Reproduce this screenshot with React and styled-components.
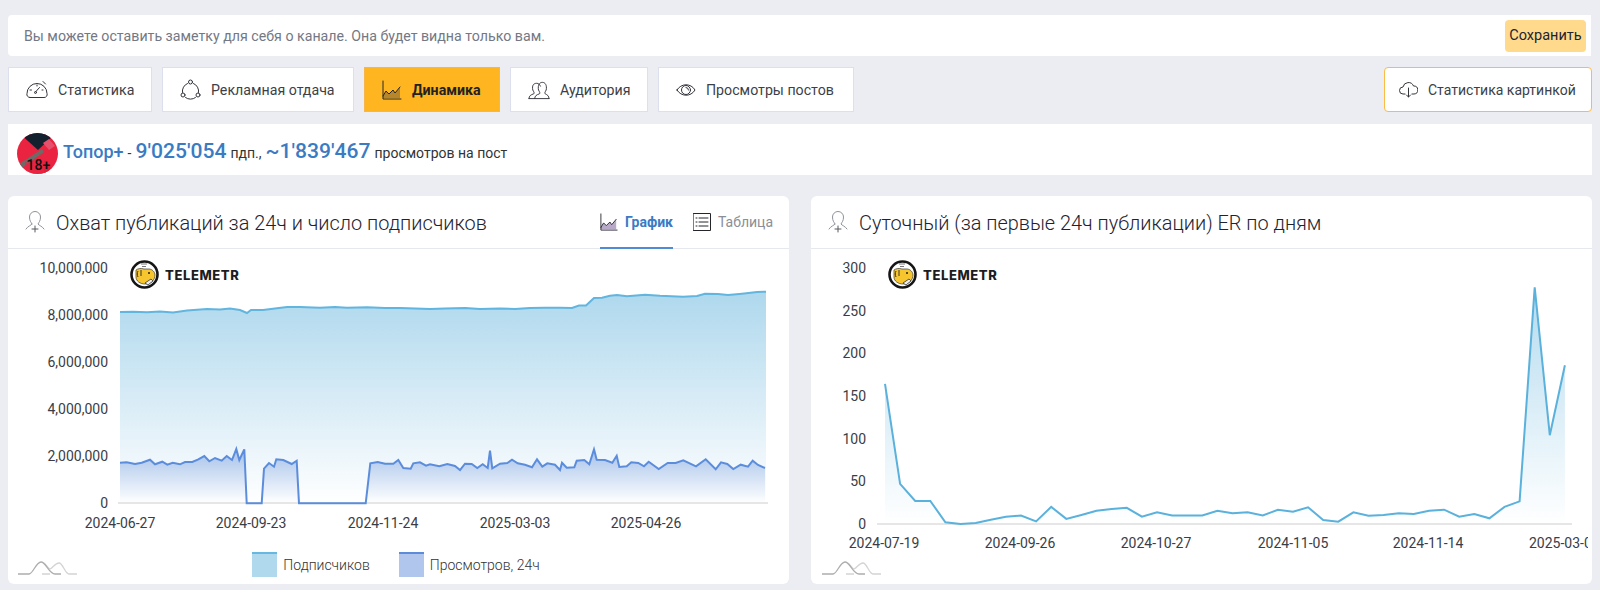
import styled, { createGlobalStyle } from 'styled-components';

const GlobalStyle = createGlobalStyle`
  html, body {
    margin: 0;
    padding: 0;
    background: #ecedf2;
    font-family: Roboto, "Noto Sans", sans-serif;
    color: #222;
  }
`;

const Page = styled.div`
  width: 1600px;
  height: 590px;
  box-sizing: border-box;
  padding: 15px 8px 6px;
  overflow: hidden;
  display: flex;
  flex-direction: column;
`;

const NoteBar = styled.div`
  height: 41px;
  box-sizing: border-box;
  background: #fff;
  border-radius: 4px 0 0 4px;
  display: flex;
  align-items: center;
  justify-content: space-between;
  padding: 0 5px 0 16px;
  margin: 0 1px 11px 0;
`;

const NoteText = styled.span`
  font-size: 14.2px;
  color: #737884;
`;

const SaveButton = styled.button`
  width: 81px;
  height: 32px;
  border: 0;
  padding: 0;
  border-radius: 4px;
  background: #ffd98c;
  font: 400 14.5px Roboto, sans-serif;
  color: #1c2430;
`;

const TabsRow = styled.div`
  display: flex;
  gap: 10px;
  height: 45px;
  margin-bottom: 12px;
`;

const NavTab = styled.div`
  width: ${(p) => p.$width}px;
  box-sizing: border-box;
  display: flex;
  align-items: center;
  gap: 10px;
  padding-left: 17px;
  background: ${(p) => (p.$active ? '#ffb520' : '#fff')};
  border: 1px solid ${(p) => (p.$active ? '#f7b64a' : '#dcdfee')};
  font-size: 14.2px;
  font-weight: ${(p) => (p.$active ? 700 : 400)};
  color: ${(p) => (p.$active ? '#222' : '#3c3f48')};
`;

const ImageButton = styled.div`
  margin-left: auto;
  width: 208px;
  box-sizing: border-box;
  display: flex;
  align-items: center;
  gap: 10px;
  padding-left: 14px;
  background: #fff;
  border: 1px solid #fbbb45;
  border-radius: 4px;
  font-size: 14px;
  color: #3c3f48;
`;

const ChannelBar = styled.div`
  height: 51px;
  box-sizing: border-box;
  background: #fff;
  display: flex;
  align-items: center;
  gap: 5px;
  padding: 8px 0 0 9px;
  margin-bottom: 21px;
`;

const ChannelLine = styled.div`
  display: flex;
  align-items: baseline;
  gap: 4px;
  margin-bottom: 6px;
  font-size: 14px;
  color: #333;
`;

const ChannelName = styled.span`
  font-size: 18px;
  font-weight: 500;
  color: #3a7bc4;
`;

const ChannelNumber = styled.span`
  font-size: 21.1px;
  font-weight: 500;
  color: #3a7bc4;
`;

const Cards = styled.div`
  display: grid;
  grid-template-columns: 781px 781px;
  gap: 22px;
  height: 388px;
`;

const Card = styled.section`
  position: relative;
  background: #fff;
  border-radius: 6px;
  overflow: hidden;
`;

const CardHeader = styled.header`
  height: 53px;
  box-sizing: border-box;
  border-bottom: 1px solid #e6e8f0;
  display: flex;
  align-items: center;
  gap: 11px;
  padding-left: 17px;
`;

const CardTitle = styled.h2`
  margin: 2px 0 0;
  font-size: 19.9px;
  font-weight: 300;
  color: #1d2330;
`;

const ViewTabs = styled.div`
  margin-left: auto;
  display: flex;
  gap: 20px;
  height: 100%;
  padding-right: 16px;
`;

const ViewTab = styled.div`
  display: flex;
  align-items: center;
  gap: 7px;
  margin-bottom: -1px;
  font-size: 14px;
  font-weight: ${(p) => (p.$active ? 700 : 400)};
  color: ${(p) => (p.$active ? '#3a7bc4' : '#8b8e96')};
  border-bottom: 2px solid ${(p) => (p.$active ? '#4f8cd6' : 'transparent')};
`;

const ChartSvg = styled.svg`
  display: block;
`;

const AxisText = styled.text`
  font: 400 14px Roboto, sans-serif;
  fill: #3a3d45;
`;

const Legend = styled.div`
  display: flex;
  justify-content: center;
  gap: 29px;
  margin-top: 7px;
  padding-right: 5px;
`;

const LegendItem = styled.div`
  display: flex;
  align-items: center;
  gap: 6px;
  font-size: 14px;
  font-weight: 300;
  color: #333;
`;

const Swatch = styled.span`
  width: 25px;
  height: 25px;
  box-sizing: border-box;
  background: ${(p) => p.$fill};
  border-top: 2px solid ${(p) => p.$line};
`;

const LogoMark = styled.div`
  position: absolute;
  top: 64px;
  left: ${(p) => p.$left}px;
  display: flex;
  align-items: center;
  gap: 6px;
  font: 800 13px Inter, Roboto, sans-serif;
  letter-spacing: 0.6px;
  color: #1d1d1f;
`;

const Navigator = styled.svg`
  position: absolute;
  left: ${(p) => p.$left}px;
  bottom: 8px;
`;

const lineIcon = {
  fill: 'none',
  stroke: '#33353c',
  strokeWidth: 1,
  strokeLinecap: 'round',
  strokeLinejoin: 'round',
};

const GaugeIcon = () => (
  <svg width="22" height="20" viewBox="0 0 22 20" {...lineIcon}>
    <path d="M4 17.5h14a3 3 0 0 0 3-4 10 10 0 0 0-20 0 3 3 0 0 0 3 4z" />
    <path d="M9.5 12l4-4.5M4 10h1.5M17 10h-1M11 5v1" />
    <circle cx="9.5" cy="12.5" r="1" />
    <path d="M17 1.5l2.5 2.5" />
  </svg>
);

const OrbitIcon = () => (
  <svg width="21" height="21" viewBox="0 0 21 21" {...lineIcon}>
    <path d="M7.5 4.5a8 8 0 0 0-5 9M13.5 4.5a8 8 0 0 1 5 9M5.5 18.5a8 8 0 0 0 10 0" />
    <circle cx="10.5" cy="3" r="2" />
    <circle cx="3" cy="16" r="2" />
    <circle cx="18" cy="16" r="2" />
  </svg>
);

const TrendIcon = ({ fill = '#b8862a', size = 20 }) => (
  <svg width={size} height={size} viewBox="0 0 20 20" {...lineIcon} stroke="#24262c">
    <path d="M1 16l3-5 3 3 4-4 2 3 5-6v11H1z" fill={fill} stroke="none" />
    <path d="M1 1v18h18" />
    <path d="M1 16l3-5 3 3 4-4 2 3 5-6" />
  </svg>
);

const PeopleIcon = () => (
  <svg width="22" height="20" viewBox="0 0 23 20" {...lineIcon}>
    <path d="M1 19c0-3 2-4 5-5 1-1 0-2-1-4-1-5 1-7 4-7 2 0 3 1 4 3" />
    <path d="M7 19c0-3 2-4 5-5 1-1 0-2-1-4-1-5 1-8 4-8s5 3 4 8c-1 2-2 3-1 4 2 1 4 2 4 5" />
    <path d="M1 19h21" />
  </svg>
);

const EyeIcon = () => (
  <svg width="20" height="14" viewBox="0 0 20 14" {...lineIcon}>
    <path d="M1 7c4-7 14-7 18 0-4 7-14 7-18 0z" />
    <circle cx="10" cy="7" r="4.5" />
    <path d="M10 4.5a2.5 2.5 0 0 1 2.5 2.5" />
  </svg>
);

const CloudIcon = () => (
  <svg width="19" height="17" viewBox="0 0 19 17" {...lineIcon}>
    <path d="M6 13H4a3.5 3.5 0 0 1 0-7 5.5 5.5 0 0 1 10.5-1 4 4 0 0 1 .5 8h-2" />
    <path d="M9.5 7v9M7.5 14l2 2 2-2" />
  </svg>
);

const PersonPlusIcon = () => (
  <svg width="20" height="22" viewBox="0 0 20 22" {...lineIcon} stroke="#8f929a">
    <path d="M7 13c-1-2-2.500-3-2.500-7a5.500 5.500 0 0 1 11 0c0 4-1.500 5-2.500 7 1 1.500 4 2 6 5M7 13c-1 1.500-4 2-6 5" />
    <path d="M10 15v6M7 18h6" stroke="#55585f" />
  </svg>
);

const TableIcon = () => (
  <svg width="18" height="18" viewBox="0 0 18 18" {...lineIcon} stroke="#24262c">
    <rect x="0.5" y="0.5" width="17" height="17" />
    <path d="M6 5h9M6 9h9M6 13h9" />
    <path d="M3 5h1M3 9h1M3 13h1" />
  </svg>
);

const Avatar = () => (
  <svg width="41" height="41" viewBox="0 0 41 41">
    <defs>
      <clipPath id="avatar-clip">
        <circle cx="20.5" cy="20.5" r="20.5" />
      </clipPath>
    </defs>
    <g clipPath="url(#avatar-clip)">
      <rect width="41" height="41" fill="#ea2440" />
      <path d="M2 0h37L21 17z" fill="#13202e" />
      <path d="M27 27l14 14H27z" fill="#d81f3a" />
      <path d="M2 31L25 16l2 3L5 35z" fill="#6d6a68" />
      <path d="M26 10l6-4 6 7-6 4z" fill="#e5506a" />
      <path d="M8 41V29h22v12z" fill="#ea2440" opacity="0.55" />
      <text x="9.5" y="37" fontFamily="Roboto, sans-serif" fontSize="14" fontWeight="500" fill="#111">18+</text>
    </g>
  </svg>
);

const LogoGlyph = () => (
  <svg width="29" height="29" viewBox="0 0 29 29">
    <circle cx="14.5" cy="14.500" r="13" fill="#fff" stroke="#151515" strokeWidth="2.6" />
    <path d="M6 10c2-1.500 5-2 8-1h5c3 0 6 3 6 6 0 5-4 9-10 9-5 0-9-3-9-7z" fill="#f7c62f" stroke="#333" strokeWidth="0.7" />
    <path d="M11 4h6M12 6.500h4" stroke="#777" strokeWidth="1" />
    <path d="M8 11c-1 2-1 4 0 6M11 10v6" stroke="#333" fill="none" strokeWidth="1" />
    <circle cx="19" cy="13" r="1" fill="#222" />
    <path d="M15 23l6-4 2 2-5 4z" fill="#eee" stroke="#333" strokeWidth="0.8" />
  </svg>
);

const NavigatorGlyph = ({ left }) => (
  <Navigator $left={left} width="60" height="16" viewBox="0 0 60 16" fill="none">
    <path d="M25 3c3 0 4 5 7 6 3-1 5-6 9-6 4 0 6 11 10 11h8M32 14h-8" stroke="#d4d4d4" strokeWidth="1.300" />
    <path d="M0 14h11c4 0 7-12 12-12s8 12 14 12h6" stroke="#adadad" strokeWidth="1.300" />
  </Navigator>
);

// points read off the picture: [x, y] in page pixels
const subscribers = [
  [120, 312], [133, 311.7], [147, 312.3], [160, 311.5], [173, 312.5], [187, 310.5], [207, 309], [220, 309.5], [230, 308.500], [240, 310], [247, 313], [251, 310],
  [263, 310], [275, 308.500], [287, 307], [300, 307], [320, 307.7], [335, 307], [347, 307.7], [367, 307.3], [385, 308], [400, 308], [430, 309], [445, 308.500], [465, 308], [480, 309], [500, 308.500],
  [515, 309], [530, 308], [545, 307.7], [560, 307.700], [572, 308], [579, 305.500], [586, 305.500], [594, 298], [602, 297.700], [610, 295.700], [617, 295], [627, 296.300],
  [645, 294.700], [660, 295.700], [683, 296.700], [697, 296], [705, 293.700], [718, 294], [728, 295], [742, 293.700], [757, 292], [766, 291.700],
];

const viewsA = [
  [60, 128], [80, 127], [105, 132], [125, 128], [150, 119], [165, 133], [187, 125], [202, 134], [218, 128], [240, 133], [255, 126],
  [277, 126], [295, 118], [313, 108], [328, 124], [345, 114], [365, 122], [380, 108], [396, 120], [409, 87], [418, 120], [433, 88],
  [440, 250], [485, 250], [492, 146], [507, 129], [522, 140], [529, 118], [550, 120], [575, 132], [590, 122], [597, 250], [797, 250],
  [811, 130], [833, 126], [855, 131], [880, 131], [895, 120], [910, 144], [932, 146], [940, 130], [960, 127], [978, 137],
].map(([x, y]) => [100 + x / 3, 420 + y / 3]);

const viewsB = [
  [0, 133], [28, 139], [52, 132], [75, 138], [90, 150], [105, 131], [125, 132], [142, 144], [158, 133], [173, 144], [180, 92], [187, 145],
  [210, 131], [232, 129], [246, 119], [263, 130], [285, 134], [306, 142], [321, 118], [337, 140], [352, 130], [375, 134], [390, 150],
  [396, 128], [410, 143], [433, 142], [440, 122], [463, 120], [478, 133], [492, 88], [500, 119], [525, 120], [547, 128], [560, 107],
  [568, 141], [590, 139], [604, 127], [625, 129], [642, 139], [656, 125], [686, 147], [713, 129], [737, 129], [760, 121], [798, 139],
  [827, 118], [857, 148], [873, 127], [892, 132], [910, 147], [932, 134], [954, 140], [968, 122], [984, 135], [1005, 144],
].map(([x, y]) => [430 + x / 3, 420 + y / 3]);

const views = [...viewsA, ...viewsB];

const er = [
  164, 47, 27, 27, 2, 0, 1, 5, 8.5, 10, 3, 20, 6, 10.5, 15.5, 17.5, 19, 8.5, 13.7, 10, 10,
  10, 15.5, 12.5, 13.7, 10, 16.8, 14.4, 19.5, 4.7, 2.7, 13.7, 9.7, 10.5, 12.5, 11.7, 15.5, 16.8, 8.5, 11.7, 6.7, 20, 26.5, 277, 104, 186,
];
const erPoints = er.map((v, i) => [885 + i * 15.11, 524 - v * 0.854]);

const toLine = (pts) => pts.map(([x, y]) => `${x.toFixed(1)},${y.toFixed(1)}`).join(' ');
const toArea = (pts, base) => `${pts[0][0]},${base} ${toLine(pts)} ${pts[pts.length - 1][0]},${base}`;

const reachTicks = [
  ['10,000,000', 268], ['8,000,000', 315], ['6,000,000', 362], ['4,000,000', 409], ['2,000,000', 456], ['0', 503],
];
const reachDates = [['2024-06-27', 120], ['2024-09-23', 251], ['2024-11-24', 383], ['2025-03-03', 515], ['2025-04-26', 646]];

const erTicks = [['300', 268], ['250', 311], ['200', 353], ['150', 396], ['100', 439], ['50', 481], ['0', 524]];
const erDates = [['2024-07-19', 884], ['2024-09-26', 1020], ['2024-10-27', 1156], ['2024-11-05', 1293], ['2024-11-14', 1428]];

const ReachChart = () => (
  <ChartSvg width="781" height="296" viewBox="8 249 781 296">
    <defs>
      <linearGradient id="sub-fill" gradientUnits="userSpaceOnUse" x1="0" y1="292" x2="0" y2="503">
        <stop offset="0" stopColor="#aed8ed" />
        <stop offset="0.6" stopColor="#dfeff8" />
        <stop offset="1" stopColor="#ffffff" />
      </linearGradient>
      <linearGradient id="views-fill" gradientUnits="userSpaceOnUse" x1="0" y1="450" x2="0" y2="503">
        <stop offset="0" stopColor="#a6c2ea" />
        <stop offset="1" stopColor="#ffffff" />
      </linearGradient>
    </defs>
    {reachTicks.map(([label, y]) => (
      <AxisText key={label} x="108" y={y + 5} textAnchor="end">{label}</AxisText>
    ))}
    {reachDates.map(([label, x]) => (
      <AxisText key={label} x={x} y="528" textAnchor="middle">{label}</AxisText>
    ))}
    <polygon points={toArea(subscribers, 503)} fill="url(#sub-fill)" />
    <polyline points={toLine(subscribers)} fill="none" stroke="#62b5de" strokeWidth="2" />
    <polygon points={toArea(views, 503)} fill="url(#views-fill)" />
    <rect x="118" y="502" width="650" height="2" fill="#e6e6e6" />
    <polyline points={toLine(views)} fill="none" stroke="#5b8ddc" strokeWidth="2" />
  </ChartSvg>
);

const ErChart = () => (
  <ChartSvg width="781" height="334" viewBox="811 249 781 334">
    <defs>
      <linearGradient id="er-fill" gradientUnits="userSpaceOnUse" x1="0" y1="287" x2="0" y2="524">
        <stop offset="0" stopColor="#b4dbef" />
        <stop offset="1" stopColor="#ffffff" />
      </linearGradient>
      <clipPath id="er-clip">
        <rect x="811" y="249" width="777" height="334" />
      </clipPath>
    </defs>
    {erTicks.map(([label, y]) => (
      <AxisText key={label} x="866" y={y + 5} textAnchor="end">{label}</AxisText>
    ))}
    {erDates.map(([label, x]) => (
      <AxisText key={label} x={x} y="548" textAnchor="middle">{label}</AxisText>
    ))}
    <AxisText x="1529" y="548" clipPath="url(#er-clip)">2025-03-03</AxisText>
    <polygon points={toArea(erPoints, 524)} fill="url(#er-fill)" />
    <rect x="877" y="523" width="695" height="2" fill="#e6e6e6" />
    <polyline points={toLine(erPoints)} fill="none" stroke="#5ab1db" strokeWidth="2" />
  </ChartSvg>
);

const navTabs = [
  { label: 'Статистика', width: 144, icon: <GaugeIcon /> },
  { label: 'Рекламная отдача', width: 192, icon: <OrbitIcon /> },
  { label: 'Динамика', width: 136, icon: <TrendIcon />, active: true },
  { label: 'Аудитория', width: 138, icon: <PeopleIcon /> },
  { label: 'Просмотры постов', width: 196, icon: <EyeIcon /> },
];

export default function App() {
  return (
    <Page>
      <GlobalStyle />
      <NoteBar>
        <NoteText>Вы можете оставить заметку для себя о канале. Она будет видна только вам.</NoteText>
        <SaveButton>Сохранить</SaveButton>
      </NoteBar>

      <TabsRow>
        {navTabs.map((tab) => (
          <NavTab key={tab.label} $width={tab.width} $active={tab.active}>
            {tab.icon}
            {tab.label}
          </NavTab>
        ))}
        <ImageButton>
          <CloudIcon />
          Статистика картинкой
        </ImageButton>
      </TabsRow>

      <ChannelBar>
        <Avatar />
        <ChannelLine>
          <ChannelName>Топор+</ChannelName>
          <span>-</span>
          <ChannelNumber>9'025'054</ChannelNumber>
          <span>пдп.,</span>
          <ChannelNumber>~1'839'467</ChannelNumber>
          <span>просмотров на пост</span>
        </ChannelLine>
      </ChannelBar>

      <Cards>
        <Card>
          <CardHeader>
            <PersonPlusIcon />
            <CardTitle>Охват публикаций за 24ч и число подписчиков</CardTitle>
            <ViewTabs>
              <ViewTab $active>
                <TrendIcon fill="#b9a9c9" size={18} />
                График
              </ViewTab>
              <ViewTab>
                <TableIcon />
                Таблица
              </ViewTab>
            </ViewTabs>
          </CardHeader>
          <ReachChart />
          <LogoMark $left={122}>
            <LogoGlyph />
            TELEMETR
          </LogoMark>
          <Legend>
            <LegendItem>
              <Swatch $fill="#b1d9ee" $line="#66b8e0" />
              Подписчиков
            </LegendItem>
            <LegendItem>
              <Swatch $fill="#b0c6ec" $line="#5b8bd9" />
              Просмотров, 24ч
            </LegendItem>
          </Legend>
          <NavigatorGlyph left={10} />
        </Card>

        <Card>
          <CardHeader>
            <PersonPlusIcon />
            <CardTitle>Суточный (за первые 24ч публикации) ER по дням</CardTitle>
          </CardHeader>
          <ErChart />
          <LogoMark $left={77}>
            <LogoGlyph />
            TELEMETR
          </LogoMark>
          <NavigatorGlyph left={11} />
        </Card>
      </Cards>
    </Page>
  );
}
